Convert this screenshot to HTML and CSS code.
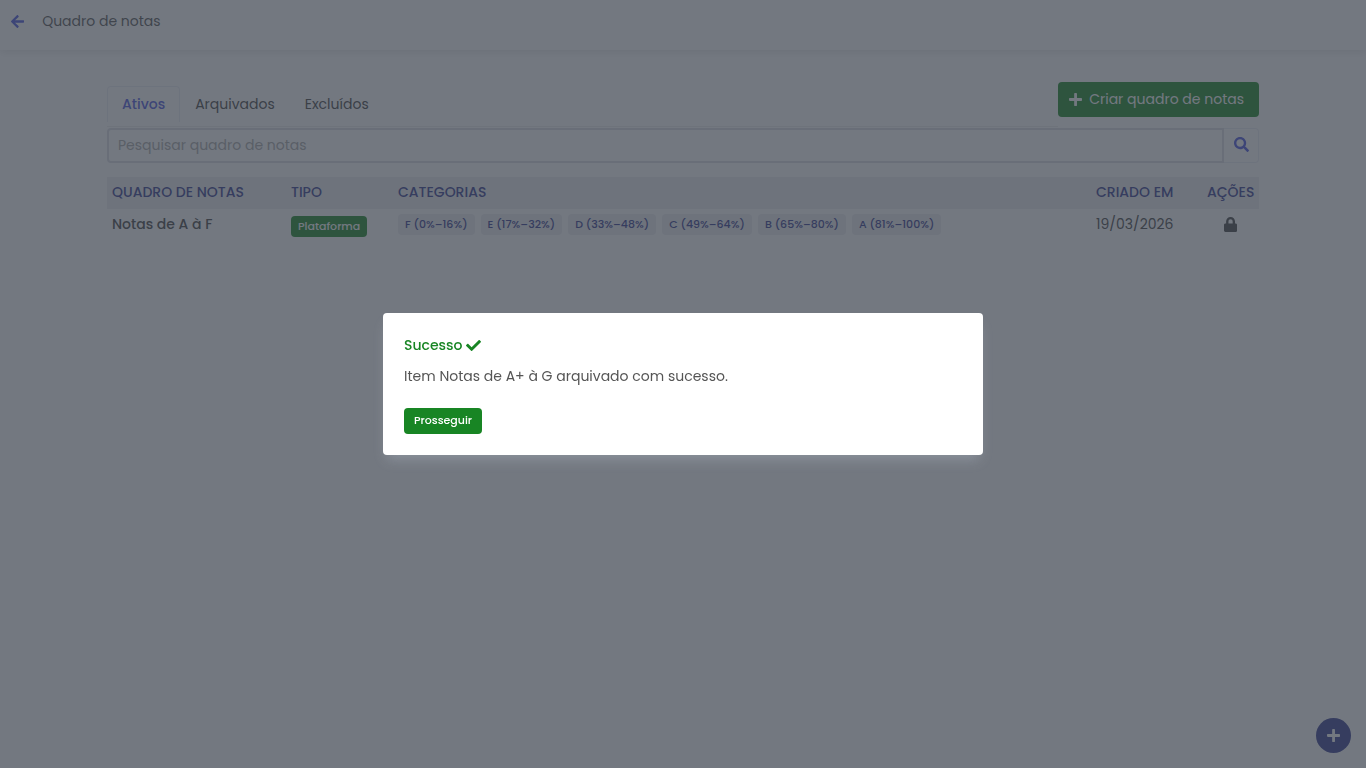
FILE: index.html
```html
<!DOCTYPE html>
<html lang="pt-BR">
<head>
  <meta charset="UTF-8" />
  <meta name="viewport" content="width=device-width, initial-scale=1.0" />
  <title>Quadro de notas</title>
  <link rel="stylesheet" href="styles.css">
</head>
<body>

  <header class="topbar">
    <a href="#voltar" class="back" aria-label="Voltar">
      <svg viewBox="0 0 448 512"><path d="M257.500 445.100l-22.200 22.200c-9.400 9.400-24.600 9.400-33.900 0L7 273c-9.400-9.400-9.400-24.600 0-33.900L201.400 44.700c9.400-9.400 24.600-9.400 33.900 0l22.200 22.200c9.500 9.500 9.300 25-.4 34.300L136.600 216H424c13.300 0 24 10.700 24 24v32c0 13.300-10.700 24-24 24H136.600l120.500 114.800c9.800 9.300 10 24.800.4 34.300z"/></svg>
    </a>
    <h1>Quadro de notas</h1>
  </header>

  <main class="container">
    <div class="toolbar">
      <ul class="tabs">
        <li><a href="#ativos" class="active">Ativos</a></li>
        <li><a href="#arquivados">Arquivados</a></li>
        <li><a href="#excluidos">Excluídos</a></li>
      </ul>
      <button type="button" class="btn-create">
        <svg viewBox="0 0 448 512"><path d="M416 208H272V64c0-17.700-14.300-32-32-32h-32c-17.700 0-32 14.300-32 32v144H32c-17.700 0-32 14.300-32 32v32c0 17.700 14.300 32 32 32h144v144c0 17.700 14.300 32 32 32h32c17.700 0 32-14.300 32-32V304h144c17.700 0 32-14.300 32-32v-32c0-17.700-14.300-32-32-32z"/></svg>
        Criar quadro de notas
      </button>
    </div>

    <form class="search">
      <input type="text" placeholder="Pesquisar quadro de notas" aria-label="Pesquisar quadro de notas">
      <button type="button" aria-label="Pesquisar">
        <svg viewBox="0 0 512 512"><path d="M505 442.700L405.300 343c-4.500-4.500-10.600-7-17-7H372c27.600-35.300 44-79.700 44-128C416 93.100 322.900 0 208 0S0 93.100 0 208s93.100 208 208 208c48.300 0 92.700-16.400 128-44v16.300c0 6.400 2.500 12.500 7 17l99.700 99.700c9.400 9.400 24.600 9.400 33.900 0l28.300-28.300c9.400-9.400 9.400-24.600.1-34zM208 336c-70.700 0-128-57.200-128-128 0-70.700 57.200-128 128-128 70.700 0 128 57.200 128 128 0 70.700-57.200 128-128 128z"/></svg>
      </button>
    </form>

    <table class="boards">
      <thead>
        <tr>
          <th class="col-name">Quadro de notas</th>
          <th class="col-type">Tipo</th>
          <th>Categorias</th>
          <th class="col-date">Criado em</th>
          <th class="col-actions">Ações</th>
        </tr>
      </thead>
      <tbody>
        <tr>
          <td class="name">Notas de A à F</td>
          <td class="type"><span class="badge">Plataforma</span></td>
          <td>
            <div class="grades">
              <span class="grade">F (0%–16%)</span>
              <span class="grade">E (17%–32%)</span>
              <span class="grade">D (33%–48%)</span>
              <span class="grade">C (49%–64%)</span>
              <span class="grade">B (65%–80%)</span>
              <span class="grade">A (81%–100%)</span>
            </div>
          </td>
          <td>19/03/2026</td>
          <td class="actions">
            <svg viewBox="0 0 448 512" role="img" aria-label="Bloqueado"><path d="M400 224h-24v-72C376 68.200 307.800 0 224 0S72 68.200 72 152v72H48c-26.500 0-48 21.500-48 48v192c0 26.500 21.500 48 48 48h352c26.500 0 48-21.500 48-48V272c0-26.500-21.500-48-48-48zm-104 0H152v-72c0-39.700 32.300-72 72-72s72 32.300 72 72v72z"/></svg>
          </td>
        </tr>
      </tbody>
    </table>
  </main>

  <button type="button" class="fab" aria-label="Adicionar">
    <svg viewBox="0 0 448 512"><path d="M416 208H272V64c0-17.700-14.300-32-32-32h-32c-17.700 0-32 14.300-32 32v144H32c-17.700 0-32 14.300-32 32v32c0 17.700 14.300 32 32 32h144v144c0 17.700 14.300 32 32 32h32c17.700 0 32-14.300 32-32V304h144c17.700 0 32-14.300 32-32v-32c0-17.700-14.300-32-32-32z"/></svg>
  </button>

  <div class="overlay">
    <div class="modal" role="dialog" aria-modal="true" aria-labelledby="modal-title">
      <h2 id="modal-title">
        Sucesso
        <svg viewBox="0 0 512 512"><path d="M173.900 439.400l-166.400-166.400c-10-10-10-26.200 0-36.200l36.200-36.200c10-10 26.200-10 36.200 0L192 312.700 432.100 72.600c10-10 26.200-10 36.200 0l36.200 36.200c10 10 10 26.200 0 36.200L210.100 439.400c-10 10-26.200 10-36.200 0z"/></svg>
      </h2>
      <p>Item Notas de A+ à G arquivado com sucesso.</p>
      <button type="button" class="btn-continue">Prosseguir</button>
    </div>
  </div>

</body>
</html>
```
FILE: styles.css
```css
/* Reset */
* {
  margin: 0;
  padding: 0;
  box-sizing: border-box;
}

body {
  font-family: 'Poppins', 'Inter', sans-serif;
  font-size: 14px;
  line-height: 21px;
  color: #444;
  background: #fff;
}

button,
input {
  font: inherit;
  border: none;
}

button {
  cursor: pointer;
}

a {
  text-decoration: none;
  color: inherit;
}

svg {
  display: block;
  height: 15px;
  fill: currentColor;
}

/* Top bar */
.topbar {
  display: flex;
  align-items: center;
  gap: 18px;
  height: 50px;
  padding: 0 11px 8px;
  box-shadow: 0 2px 8px rgba(0, 0, 0, 0.1);
}

.topbar h1 {
  font-size: 14px;
  font-weight: 400;
  color: #555;
}

.back {
  color: #4a55e0;
}

.container {
  width: 100%;
  max-width: 1152px;
  margin: 0 auto;
  padding-top: 32px;
}

/* Tabs */
.toolbar {
  display: flex;
  justify-content: space-between;
  align-items: flex-start;
}

.tabs {
  flex: 1;
  display: flex;
  list-style: none;
  padding-top: 4px;
  height: 45px;
  border-bottom: 1px solid #eee;
}

.tabs a {
  display: block;
  padding: 7px 14px;
  border: 1px solid transparent;
  border-bottom: none;
  border-radius: 4px 4px 0 0;
}

.tabs .active {
  color: #4a55e0;
  font-weight: 500;
  border-color: #eceef5;
}

.btn-create {
  display: flex;
  align-items: center;
  gap: 7px;
  height: 35px;
  padding: 0 15px 0 11px;
  border-radius: 4px;
  color: #fff;
  background: #188524;
}

/* Search */
.search {
  display: flex;
  height: 35px;
  margin-top: 1px;
}

.search input {
  flex: 1;
  min-width: 0;
  padding: 0 9px 1px;
  border: 2px solid #dcdde4;
  border-radius: 4px 0 0 4px;
  background: transparent;
}

.search input::placeholder {
  color: #aaa;
}

.search button {
  display: flex;
  align-items: center;
  justify-content: center;
  width: 35px;
  padding-bottom: 2px;
  border: 1px solid #eceef5;
  border-left: none;
  border-radius: 0 4px 4px 0;
  color: #4a55e0;
  background: transparent;
}

/* Table */
.boards {
  width: 100%;
  margin-top: 14px;
  table-layout: fixed;
  border-collapse: collapse;
}

.boards th {
  height: 32px;
  padding: 0 5px 2px;
  text-align: left;
  text-transform: uppercase;
  font-weight: 500;
  color: #33398f;
  background: #ededf1;
}

.boards td {
  height: 32px;
  padding: 0 5px 2px;
}

.col-name {
  width: 179px;
}

.col-type {
  width: 107px;
}

.col-date {
  width: 111px;
}

.col-actions {
  width: 57px;
}

.boards .name {
  font-weight: 500;
}

.boards .type {
  padding: 2px 5px 0;
}

.actions svg {
  margin: 0 auto;
}

.badge,
.grade {
  display: inline-block;
  padding: 0 7px;
  border-radius: 4px;
  font-size: 11px;
  font-weight: 500;
  line-height: 21px;
  white-space: nowrap;
}

.badge {
  vertical-align: middle;
  color: #fff;
  background: #188524;
}

.grades {
  display: flex;
  gap: 6px;
}

.grade {
  color: #33398f;
  background: #ededf1;
}

/* Floating button */
.fab {
  position: fixed;
  right: 15px;
  bottom: 15px;
  display: flex;
  align-items: center;
  justify-content: center;
  width: 35px;
  height: 35px;
  border-radius: 50%;
  color: #fff;
  background: #33398f;
}

/* Modal */
.overlay {
  position: fixed;
  inset: 0;
  display: flex;
  align-items: center;
  justify-content: center;
  background: rgba(56, 62, 74, 0.7);
}

.modal {
  width: 600px;
  max-width: 90%;
  padding: 22px 21px 21px;
  border-radius: 4px;
  background: #fff;
  box-shadow: 0 8px 12px -4px rgba(200, 210, 225, 0.3);
}

.modal h2 {
  display: flex;
  align-items: center;
  gap: 4px;
  font-size: 14px;
  font-weight: 500;
  color: #188524;
}

.modal p {
  margin: 10px 0 21px;
  color: #555;
}

.btn-continue {
  display: block;
  height: 26px;
  padding: 0 10px 2px;
  border-radius: 4px;
  font-size: 11px;
  font-weight: 500;
  color: #fff;
  background: #188524;
}
```
